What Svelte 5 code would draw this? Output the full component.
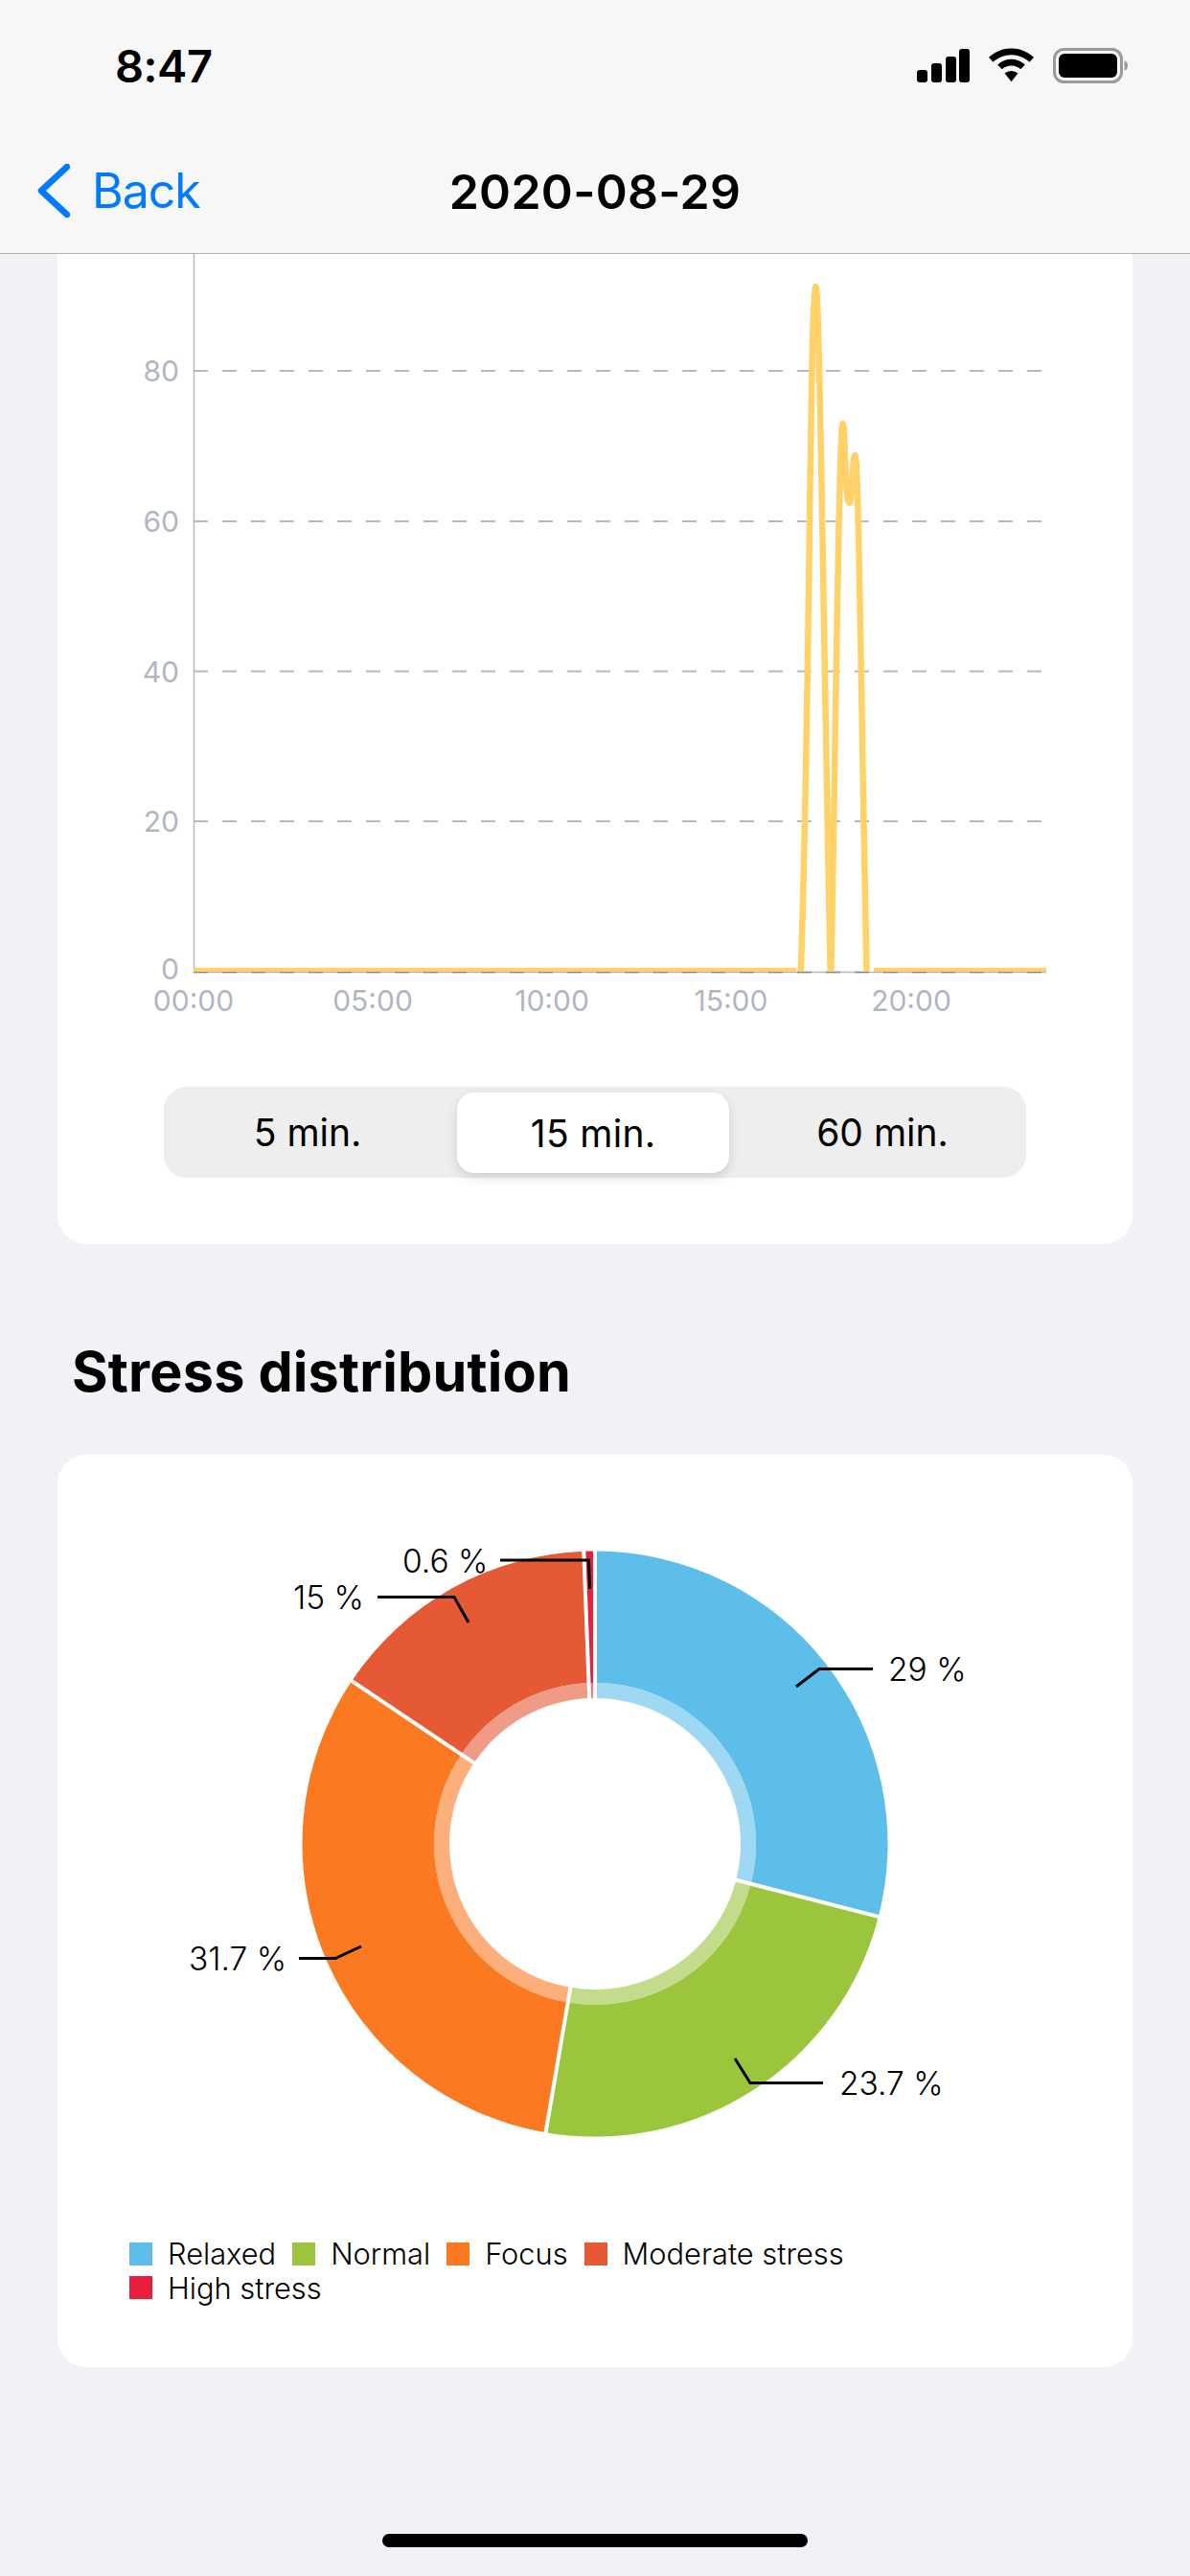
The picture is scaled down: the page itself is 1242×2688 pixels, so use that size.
<script>
	const cx = 621;
	const cy = 1924;

	const slices = [
		{ name: 'Relaxed', color: '#5dbeea', from: 0, to: 104.4 },
		{ name: 'Normal', color: '#9bc53d', from: 104.4, to: 189.7 },
		{ name: 'Focus', color: '#fa7921', from: 189.7, to: 303.8 },
		{ name: 'Moderate stress', color: '#e55934', from: 303.8, to: 357.8 },
		{ name: 'High stress', color: '#ea1f3d', from: 357.8, to: 360 }
	];

	const labels = [
		{ text: '0.6 %', x: 420, y: 1641, line: '522,1628 614.5,1628 615.5,1658' },
		{ text: '15 %', x: 306, y: 1679, line: '394,1666.5 474,1666.5 489,1693' },
		{ text: '29 %', x: 927, y: 1754, line: '911,1741.5 855,1741.5 831,1760' },
		{ text: '31.7 %', x: 197, y: 2056, line: '312,2043.5 350,2043.5 377,2031' },
		{ text: '23.7 %', x: 876, y: 2186, line: '859,2173.5 783,2173.5 767,2148' }
	];

	const yTicks = [
		{ label: '80', y: 387 },
		{ label: '60', y: 544 },
		{ label: '40', y: 700.5 },
		{ label: '20', y: 857 }
	];
	const xTicks = [
		{ label: '00:00', x: 202 },
		{ label: '05:00', x: 389 },
		{ label: '10:00', x: 576 },
		{ label: '15:00', x: 763 },
		{ label: '20:00', x: 951 }
	];

	const peaks =
		'M835 1032 C845 800 845 299 851.5 299 C855.5 299 860 700 867 1028 C871 860 875.5 442 879.5 442 C882.5 442 881.5 525 886.5 525 C889.5 525 889.5 475 892.5 475 C896.5 475 899.5 800 905 1032';

	function pt(r, deg) {
		const a = ((deg - 90) * Math.PI) / 180;
		return `${(cx + r * Math.cos(a)).toFixed(2)} ${(cy + r * Math.sin(a)).toFixed(2)}`;
	}

	function arc(inner, outer, from, to) {
		const large = to - from > 180 ? 1 : 0;
		return `M${pt(outer, from)} A${outer} ${outer} 0 ${large} 1 ${pt(outer, to)} L${pt(inner, to)} A${inner} ${inner} 0 ${large} 0 ${pt(inner, from)} Z`;
	}
</script>

<div class="screen">
	<header class="nav">
		<div class="status">
			<span class="time">8:47</span>
			<div class="status-icons">
				<svg class="signal" viewBox="0 0 55 35" aria-hidden="true">
					<rect x="0" y="22" width="11" height="13" rx="3" />
					<rect x="15" y="15" width="11" height="20" rx="3" />
					<rect x="30" y="8" width="11" height="27" rx="3" />
					<rect x="44" y="0" width="11" height="35" rx="3" />
				</svg>
				<svg class="wifi" viewBox="0 0 48 36" aria-hidden="true">
					<path d="M24 0C33 0 41 3.4 48 9.6L43.4 14.6C38 10 31.4 7 24 7S10 10 4.6 14.6L0 9.6C7 3.4 15 0 24 0Z" />
					<path d="M24 11.6C29.4 11.6 34.4 13.6 38.6 17.4L34 22.4C31 19.8 27.6 18.6 24 18.6S17 19.8 14 22.4L9.4 17.4C13.6 13.6 18.6 11.6 24 11.6Z" />
					<path d="M24 24C26.6 24 29 25 31 26.6L24 35.6 17 26.6C19 25 21.4 24 24 24Z" />
				</svg>
				<svg class="battery" viewBox="0 0 78 37" aria-hidden="true">
					<rect x="1.5" y="1.5" width="70" height="34" rx="10" fill="none" stroke="#9a9a9a" stroke-width="3" />
					<rect x="6" y="6" width="61" height="25" rx="6" />
					<path d="M74.5 13C76.8 14 78 16 78 18.5S76.8 23 74.5 24Z" fill="#9a9a9a" />
				</svg>
			</div>
		</div>
		<div class="bar">
			<button class="back" type="button">
				<svg viewBox="0 0 35 56" aria-hidden="true">
					<path d="M32 3 5 28l27 25" fill="none" stroke="currentColor" stroke-width="6.5" stroke-linecap="round" stroke-linejoin="round" />
				</svg>
				Back
			</button>
			<h1>2020-08-29</h1>
		</div>
	</header>

	<section class="card trend">
		<svg class="plot" viewBox="60 265 1122 800" aria-hidden="true">
			<defs>
				<clipPath id="plot-clip">
					<rect x="202" y="265" width="890" height="749" />
				</clipPath>
			</defs>
			{#each yTicks as tick}
				<line class="grid" x1="202" x2="1088" y1={tick.y} y2={tick.y} />
				<text class="tick" x="187" y={tick.y + 11} text-anchor="end">{tick.label}</text>
			{/each}
			<line class="axis" x1="202.5" x2="202.5" y1="265" y2="1015" />
			<line class="axis" x1="202" x2="1092" y1="1014.5" y2="1014.5" />
			<line class="baseline" x1="202" x2="1092" y1="1014.5" y2="1014.5" />
			<text class="tick" x="187" y="1022" text-anchor="end">0</text>
			{#each xTicks as tick}
				<text class="tick" x={tick.x} y="1055" text-anchor="middle">{tick.label}</text>
			{/each}
			<g clip-path="url(#plot-clip)">
				<path class="trace" d="M202 1013H831M912 1013H1092" />
				<path class="trace" d={peaks} />
			</g>
		</svg>
		<div class="segments">
			<button type="button">5 min.</button>
			<button type="button" class="active">15 min.</button>
			<button type="button">60 min.</button>
		</div>
	</section>

	<h2>Stress distribution</h2>

	<section class="card dist">
		<svg class="donut" viewBox="60 1518 1122 780" aria-hidden="true">
			{#each slices as s}
				<path d={arc(168, 305.5, s.from, s.to)} fill={s.color} />
				<path d={arc(152, 168, s.from, s.to)} fill={s.color} fill-opacity="0.6" />
			{/each}
			{#each slices as s}
				<path class="gap" d="M{pt(150, s.from)} L{pt(308, s.from)}" />
			{/each}
			{#each labels as l}
				<polyline class="leader" points={l.line} />
				<text class="pct" x={l.x} y={l.y}>{l.text}</text>
			{/each}
		</svg>
		<ul class="legend">
			{#each slices as s}
				<li>
					<span class="swatch" style="background: {s.color}"></span>
					{s.name}
				</li>
			{/each}
		</ul>
	</section>

	<div class="home"></div>
</div>

<style>
	:global(body) {
		margin: 0;
		background: #f1f1f6;
	}

	.screen {
		position: relative;
		width: 1242px;
		height: 2688px;
		overflow: hidden;
		background: #f1f1f6;
		font-family: Inter, 'Liberation Sans', sans-serif;
		color: #000;
	}

	.nav {
		height: 264px;
		background: #f7f7f7;
		border-bottom: 1px solid #b0b0b2;
	}

	.status {
		display: flex;
		justify-content: space-between;
		align-items: center;
		height: 136px;
		padding: 0 65px 0 120px;
	}

	.time {
		font-size: 47px;
		font-weight: 600;
		line-height: 1;
		letter-spacing: -0.5px;
	}

	.status-icons {
		display: flex;
		align-items: center;
		gap: 20px;
	}

	.signal {
		display: block;
		width: 55px;
		height: 35px;
	}

	.wifi {
		display: block;
		width: 47px;
		height: 36px;
	}

	.battery {
		display: block;
		width: 78px;
		height: 37px;
	}

	.bar {
		position: relative;
		display: flex;
		justify-content: center;
		align-items: center;
		height: 128px;
	}

	h1 {
		margin: 0;
		font-size: 50px;
		font-weight: 600;
		letter-spacing: 0.3px;
	}

	.back {
		position: absolute;
		left: 38px;
		top: 33px;
		display: flex;
		align-items: center;
		gap: 23px;
		padding: 0;
		border: 0;
		background: none;
		color: #007aff;
		font: 400 50px Inter, 'Liberation Sans', sans-serif;
		letter-spacing: -1px;
	}

	.back svg {
		display: block;
		width: 35px;
		height: 56px;
	}

	.card {
		margin: 0 60px;
		background: #fff;
	}

	.trend {
		height: 1033px;
		border-radius: 0 0 30px 30px;
	}

	.plot {
		display: block;
		width: 1122px;
		height: 800px;
	}

	.grid {
		stroke: #b4b8c4;
		stroke-width: 2;
		stroke-dasharray: 15 15;
	}

	.axis {
		stroke: #b4b8c4;
		stroke-width: 1.5;
	}

	.baseline {
		stroke: #85888f;
		stroke-width: 1.5;
		stroke-dasharray: 15 15;
	}

	.tick {
		fill: #b0b6c3;
		font-size: 30px;
	}

	.trace {
		fill: none;
		stroke: #ffd166;
		stroke-width: 6.5;
	}

	.segments {
		display: grid;
		grid-template-columns: repeat(3, 300px);
		height: 95px;
		margin: 69px 0 0 111px;
		width: 900px;
		border-radius: 24px;
		background: #eee;
	}

	.segments button {
		padding: 0;
		border: 0;
		background: none;
		color: #000;
		font: 400 39px Inter, 'Liberation Sans', sans-serif;
	}

	.segments .active {
		margin: 6px 10px 5px 6px;
		border-radius: 18px;
		background: #fff;
		box-shadow: 0 5px 12px rgba(0, 0, 0, 0.13);
		letter-spacing: 0.3px;
	}

	h2 {
		margin: 0;
		padding: 100px 0 0 75px;
		height: 120px;
		font-size: 57.5px;
		font-weight: 700;
		line-height: 66px;
		letter-spacing: 0.2px;
	}

	.dist {
		height: 952px;
		border-radius: 30px;
	}

	.donut {
		display: block;
		width: 1122px;
		height: 780px;
	}

	.gap {
		fill: none;
		stroke: #fff;
		stroke-width: 4;
	}

	.leader {
		fill: none;
		stroke: #000;
		stroke-width: 3;
	}

	.pct {
		font-size: 33.5px;
		font-weight: 300;
	}

	.legend {
		display: flex;
		flex-wrap: wrap;
		gap: 0 17px;
		width: 800px;
		margin: 0 0 0 75px;
		padding: 36px 0 0;
		list-style: none;
		font-size: 30.8px;
		font-weight: 300;
		line-height: 35.5px;
	}

	.legend li {
		display: flex;
		align-items: center;
		gap: 16px;
	}

	.swatch {
		width: 24px;
		height: 24px;
	}

	.home {
		position: absolute;
		left: 399px;
		top: 2644px;
		width: 444px;
		height: 14px;
		border-radius: 7px;
		background: #000;
	}
</style>
